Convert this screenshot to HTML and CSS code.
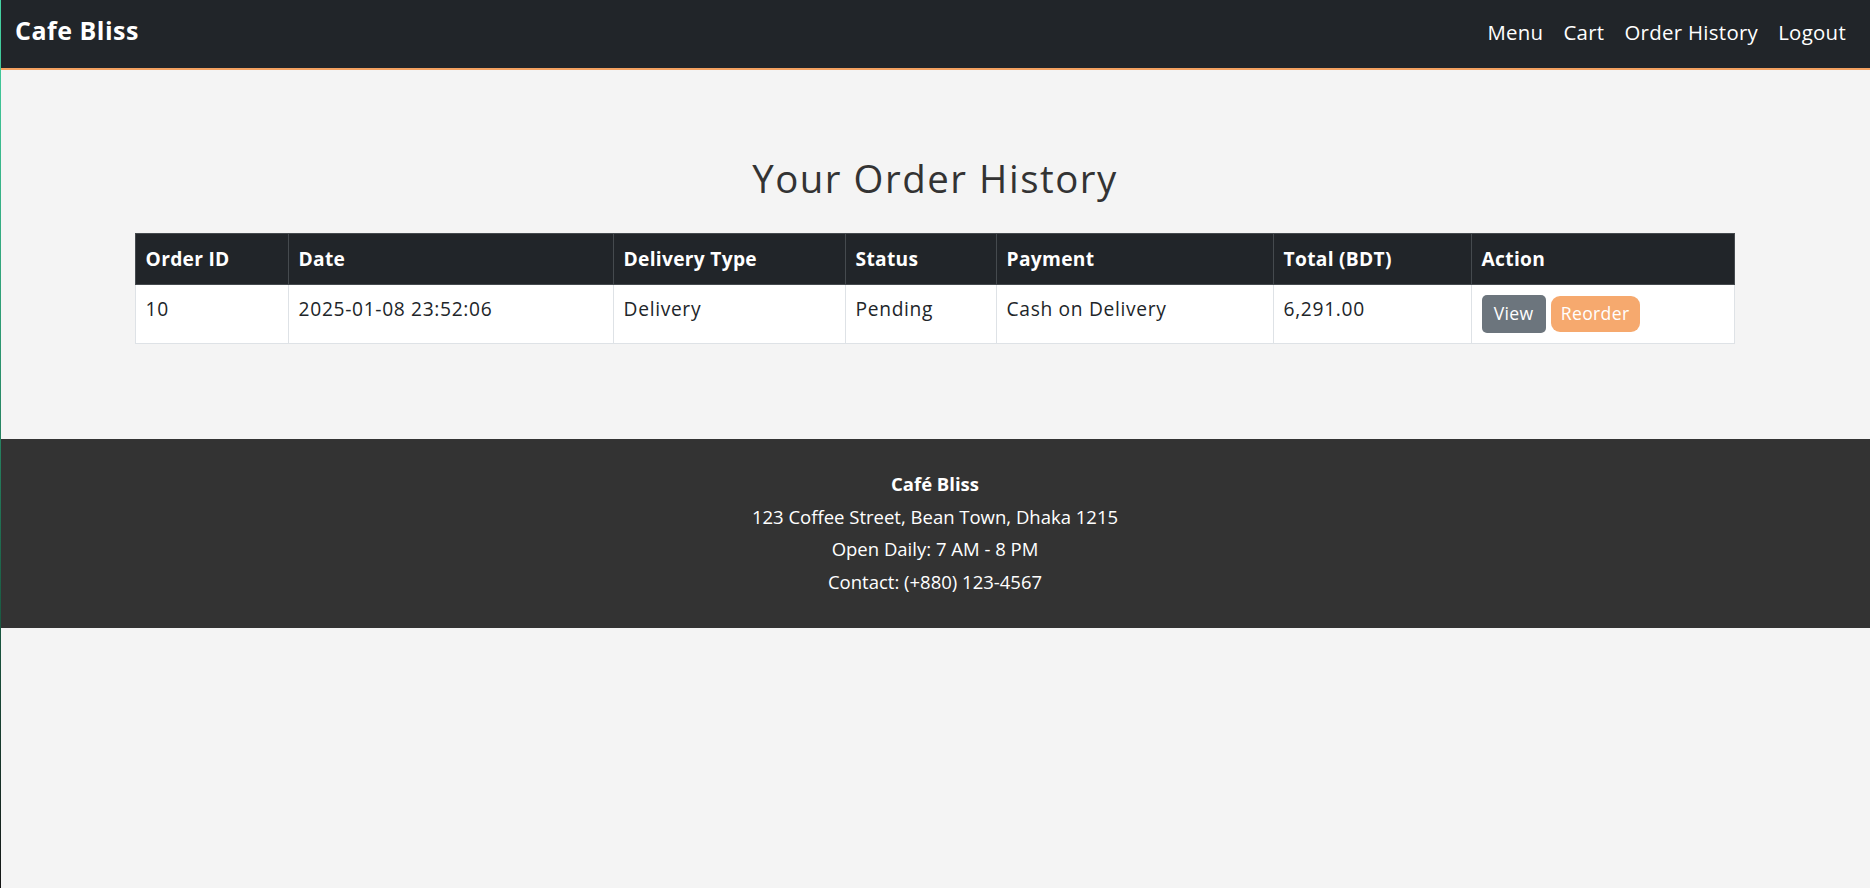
FILE: index.html
```html
<!DOCTYPE html>
<html lang="en">
<head>
<meta charset="utf-8">
<title>Order History - Cafe Bliss</title>
<link rel="stylesheet" href="styles.css">
</head>
<body>
<div class="edge"></div>
<header class="navbar">
  <a class="brand" href="#">Cafe Bliss</a>
  <nav class="nav">
    <a href="#">Menu</a>
    <a href="#">Cart</a>
    <a href="#">Order History</a>
    <a href="#">Logout</a>
  </nav>
</header>

<main class="content">
  <h2 class="title">Your Order History</h2>
  <table class="orders">
    <colgroup>
      <col class="c-id"><col class="c-date"><col class="c-type"><col class="c-status"><col class="c-pay"><col class="c-total"><col class="c-action">
    </colgroup>
    <thead>
      <tr>
        <th>Order ID</th>
        <th>Date</th>
        <th>Delivery Type</th>
        <th>Status</th>
        <th>Payment</th>
        <th>Total (BDT)</th>
        <th>Action</th>
      </tr>
    </thead>
    <tbody>
      <tr>
        <td>10</td>
        <td>2025-01-08 23:52:06</td>
        <td>Delivery</td>
        <td>Pending</td>
        <td>Cash on Delivery</td>
        <td>6,291.00</td>
        <td>
          <div class="actions">
            <a class="btn btn-view" href="#">View</a>
            <a class="btn btn-reorder" href="#">Reorder</a>
          </div>
        </td>
      </tr>
    </tbody>
  </table>
</main>

<footer class="site-footer">
  <p class="footer-name">Café Bliss</p>
  <p>123 Coffee Street, Bean Town, Dhaka 1215</p>
  <p>Open Daily: 7 AM - 8 PM</p>
  <p>Contact: (+880) 123-4567</p>
</footer>
</body>
</html>
```

FILE: styles.css
```css
* { box-sizing: border-box; }

html, body {
  margin: 0;
  padding: 0;
}

body {
  background: #f4f4f4;
  font-family: "Open Sans", "Noto Sans", sans-serif;
  font-size: 19.2px;
  line-height: 1.5;
  color: #212529;
  letter-spacing: 0.035em;
  min-height: 888px;
}

.edge {
  position: fixed;
  left: 0;
  top: 0;
  width: 1px;
  height: 100%;
  background: linear-gradient(to bottom, #45d3a3 0%, #2f9e76 35%, #1a5a42 70%, #141414 100%);
  z-index: 10;
}

/* Navbar */
.navbar {
  height: 70px;
  background: #212529;
  border-bottom: 2px solid #f4a261;
  display: flex;
  align-items: center;
  justify-content: space-between;
  padding: 0 24px 4px 15px;
}

.brand {
  color: #fff;
  text-decoration: none;
  font-weight: 700;
  font-size: 25px;
  letter-spacing: 0.02em;
  padding-bottom: 2px;
}

.nav {
  display: flex;
  gap: 20px;
}

.nav a {
  color: #fff;
  text-decoration: none;
  font-size: 20.4px;
  letter-spacing: 0.015em;
}

/* Content */
.content {
  padding: 85px 0 95px;
}

.title {
  margin: 0;
  text-align: center;
  font-size: 38.4px;
  line-height: 46px;
  font-weight: 400;
  color: #333;
  letter-spacing: 0.04em;
}

.orders {
  width: 1600px;
  margin: 32px auto 0;
  border-collapse: collapse;
  table-layout: fixed;
  background: #fff;
}

.c-id { width: 153px; }
.c-date { width: 325px; }
.c-type { width: 232px; }
.c-status { width: 151px; }
.c-pay { width: 277px; }
.c-total { width: 198px; }

.orders th,
.orders td {
  padding: 10px 9.6px;
  text-align: left;
  vertical-align: top;
  line-height: 28.8px;
}

.orders th {
  background: #212529;
  color: #fff;
  font-weight: 700;
  border: 1px solid #454a4e;
  padding-top: 10.5px;
  padding-bottom: 10.5px;
  letter-spacing: 0.015em;
}

.orders td {
  border: 1px solid #dee2e6;
  color: #212529;
}

.actions {
  display: flex;
  align-items: center;
  gap: 5px;
}

.btn {
  display: inline-flex;
  align-items: center;
  justify-content: center;
  color: #fff;
  text-decoration: none;
  font-size: 17.6px;
  line-height: 1;
  letter-spacing: 0.02em;
}

.btn-view {
  width: 64px;
  height: 38px;
  background: #6c757d;
  border-radius: 5px;
}

.btn-reorder {
  width: 89px;
  height: 36px;
  background: #f6a96e;
  border-radius: 9px;
}

/* Footer */
.site-footer {
  background: #333;
  color: #fff;
  text-align: center;
  padding: 31px 0 31px;
  display: flex;
  flex-direction: column;
  gap: 4px;
  letter-spacing: 0;
}

.site-footer p {
  margin: 0;
  font-size: 18.5px;
  line-height: 28.8px;
}

.footer-name {
  font-weight: 700;
}
```
